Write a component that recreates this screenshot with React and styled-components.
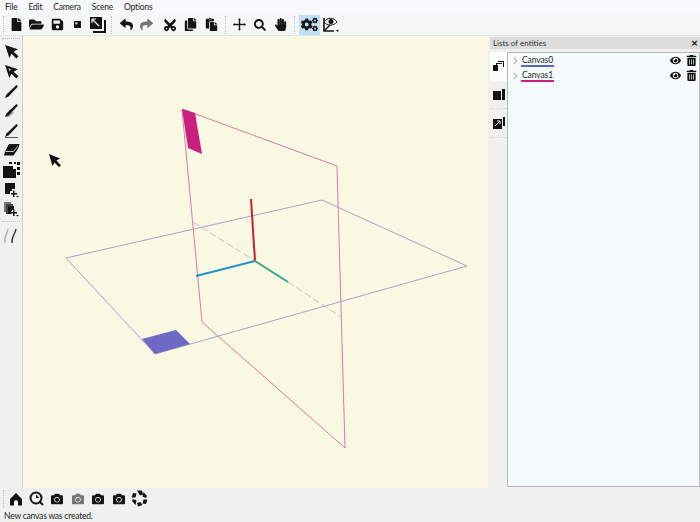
import React from "react"
import styled, { createGlobalStyle } from "styled-components"
import {
  FaFile,
  FaFolderOpen,
  FaSave,
  FaReply,
  FaShare,
  FaCut,
  FaCopy,
  FaPaste,
  FaSearch,
  FaHandPaper,
  FaCogs,
  FaEye,
  FaTrashAlt,
  FaCamera,
} from "react-icons/fa"

const GlobalStyle = createGlobalStyle`
  html, body {
    margin: 0;
    padding: 0;
    background: #f0f0f0;
    font-family: Lato, "Open Sans", sans-serif;
  }
`

const Window = styled.div`
  width: 700px;
  height: 522px;
  display: flex;
  flex-direction: column;
  overflow: hidden;
  background: #f0f0f0;
  color: #1c1c1c;
`

const MenuBar = styled.div`
  height: 14px;
  display: flex;
  align-items: center;
  gap: 11px;
  padding-left: 5px;
  background: #f7f8f9;
  font-size: 8.5px;
  letter-spacing: -0.2px;
`

const Toolbar = styled.div`
  height: 22px;
  display: flex;
  align-items: center;
  padding-left: 3px;
  background: #f5f6f6;
  border-bottom: 1px solid #e4e4e4;
  box-sizing: border-box;
`

const Group = styled.div`
  display: flex;
  align-items: center;
  margin-left: ${({ $gap }) => $gap || 0}px;
`

const Sep = styled.div`
  width: 0;
  height: 18px;
  margin-left: ${({ $gap }) => $gap || 0}px;
  border-left: 1px dotted #bdbdbd;
`

const Tool = styled.div`
  width: 20.5px;
  height: 20px;
  display: flex;
  align-items: center;
  justify-content: center;
  flex: none;
  font-size: ${({ $size }) => $size || 13}px;
  color: ${({ $muted }) => ($muted ? "#777" : "#141414")};
  background: ${({ $active }) => ($active ? "#bfe0f5" : "transparent")};
  svg {
    display: block;
    transform: ${({ $turn }) => $turn || "none"};
  }
`

const Main = styled.div`
  flex: 1;
  min-height: 0;
  display: flex;
`

const LeftBar = styled.div`
  width: 23px;
  flex: none;
  display: flex;
  flex-direction: column;
  align-items: center;
  box-sizing: border-box;
  border-right: 1px solid #d0d0d0;
  background: #f0f0f0;
`

const Grip = styled.div`
  width: 18px;
  height: 0;
  margin: 2px 0 3px;
  border-top: 1px dotted #bdbdbd;
`

const SideTool = styled(Tool)`
  height: 19.7px;
`

const HSep = styled.div`
  width: 18px;
  height: 0;
  margin: 2px 0 4px;
  border-top: 1px dotted #c4c4c4;
`

const Viewport = styled.div`
  width: 465px;
  flex: none;
  background: #f9f8e3;
  svg {
    display: block;
  }
`

const Dock = styled.div`
  flex: 1;
  display: flex;
  flex-direction: column;
  padding: 1px 0 1px 2px;
`

const DockTitle = styled.div`
  height: 12px;
  display: flex;
  align-items: center;
  justify-content: space-between;
  padding: 0 2px 0 3px;
  background: #dcdcdc;
  font-size: 8px;
  color: #333;
`

const Close = styled.span`
  font-size: 12px;
  font-weight: 700;
  color: #111;
  line-height: 1;
`

const DockBody = styled.div`
  flex: 1;
  min-height: 0;
  display: flex;
  margin-top: 3px;
`

const Tabs = styled.div`
  width: 17px;
  flex: none;
  display: flex;
  flex-direction: column;
`

const Tab = styled.div`
  height: 28.500px;
  display: flex;
  align-items: center;
  justify-content: center;
  background: ${({ $active }) => ($active ? "#fafdfc" : "transparent")};
  border-bottom: 1px dotted ${({ $active }) => ($active ? "transparent" : "#d4d4d4")};
  box-sizing: border-box;
`

const EntityList = styled.div`
  flex: 1;
  background: #f5fbfa;
  border: 1px solid #b8b8b8;
  box-sizing: border-box;
`

const EntityRow = styled.div`
  height: 15px;
  display: flex;
  align-items: center;
  padding: 0 2px 0 4px;
  color: #888;
`

const Chevron = styled.span`
  width: 5px;
  height: 5px;
  margin-left: -1px;
  border-top: 1px solid #a0a0a0;
  border-right: 1px solid #a0a0a0;
  transform: scale(0.8) rotate(45deg);
`

const EntityName = styled.span`
  margin-left: 4px;
  padding: 0 1px;
  font-size: 8.5px;
  letter-spacing: -0.1px;
  line-height: 10px;
  color: #2a2a2a;
  border-bottom: 2px solid ${({ $color }) => $color};
`

const RowIcons = styled.div`
  margin-left: auto;
  display: flex;
  align-items: center;
  gap: 5px;
  color: #111;
  font-size: 11px;
`

const BottomBar = styled.div`
  height: 21px;
  display: flex;
  align-items: center;
  padding-left: 3px;
  background: #f0f0f0;
`

const StatusBar = styled.div`
  height: 13px;
  display: flex;
  align-items: center;
  padding-left: 4px;
  font-size: 8.5px;
  letter-spacing: -0.2px;
  color: #222;
  background: #f0f0f0;
`

const Arrow = ({ hollow }) => (
  <svg width="15" height="15" viewBox="0 0 14 14">
    <path d="M1 1l12 4-4 2.200L13.500 11.500 11.500 13.500 7 9l-2 4z" fill="#141414" />
    {hollow && <path d="M4 4l3 1-2 2z" fill="#999" />}
  </svg>
)

const Pencil = ({ variant }) => (
  <svg width="15" height="15" viewBox="0 0 15 15">
    {variant === "marker" && <path d="M6 6l4 4-5 4H1z" fill="#aaa" />}
    <path d="M12.500 1l1.500 1.500L4.500 12.500 1 14l1.500-3.500z" fill="#141414" />
    {variant === "line" && <path d="M1 14.500h13" stroke="#555" strokeWidth="1" />}
  </svg>
)

const Eraser = () => (
  <svg width="17" height="14" viewBox="0 0 17 14">
    <path d="M6 1h10.500l-1 4-5 7.500H1l1-4z" fill="#141414" />
    <path d="M2.500 8.500h8L15 3" fill="none" stroke="#f0f0f0" strokeWidth="0.800" />
  </svg>
)

const SelectBox = () => (
  <svg width="18" height="18" viewBox="0 0 18 18">
    <path d="M1 5h10v3h3v9H1z" fill="#141414" />
    <path d="M7 1h3v2H7zM12 1h2v2h-2zM15 1h3v3h-3zM15 6h3v3h-3zM15 11h3v3h-3z" fill="#141414" />
  </svg>
)

const AddEntity = ({ stacked }) => (
  <svg width="16" height="16" viewBox="0 0 16 16">
    {stacked && <path d="M1 1h7v2H3v8H1z" fill="#777" />}
    {stacked && <path d="M3 3h7v2H5v8H3z" fill="#444" />}
    <path d={stacked ? "M5 5h6v4H9v1H8v3H5z" : "M2 1h10v6H9v2H7v3H2z"} fill="#141414" />
    <path d="M10 8.500h1.500V11H14v1.500h-2.500V15H10v-2.500H8V11h2z" fill="#141414" />
    <path d="M13 14h3l-1.500 1.500z" fill="#141414" />
  </svg>
)

const Curves = () => (
  <svg width="16" height="16" viewBox="0 0 16 16" fill="none">
    <path d="M2 15C0.500 9 4 7 5 1" stroke="#aaa" strokeWidth="1.300" />
    <path d="M9 15C8 9 12 7 13 1" stroke="#333" strokeWidth="1.500" />
  </svg>
)

const SmallBox = () => (
  <svg width="9" height="9" viewBox="0 0 9 9">
    <path d="M1 1h7v7H1z" fill="#141414" />
    <path d="M2 2l3 1-2 2z" fill="#f0f0f0" />
  </svg>
)

const BigBox = () => (
  <svg width="18" height="18" viewBox="0 0 18 18">
    <path d="M1 1h12v12H1z" fill="#141414" />
    <path d="M3 3l7 7M3 3h4M3 3v4" stroke="#f0f0f0" strokeWidth="1.200" fill="none" />
    <path d="M15 4h2v13H4v-2h11z" fill="#141414" />
  </svg>
)

const MoveCross = () => (
  <svg width="15" height="15" viewBox="0 0 15 15" fill="#141414">
    <path d="M6.800 2h1.400v11H6.800z" />
    <path d="M1.500 6.800h12v1.400h-12z" />
    <path d="M7.500 1l1.200 2H6.300zM7.500 14l-1.200-2h2.400zM1 7.500l2-1.200v2.400zM14 7.500l-2 1.200V6.300z" />
  </svg>
)

const EyeAxis = () => (
  <svg width="20" height="18" viewBox="0 0 20 18" fill="none">
    <path d="M4 2v13h10" stroke="#141414" strokeWidth="1.600" />
    <path d="M4 15l7-7" stroke="#141414" strokeWidth="1.400" />
    <path d="M4 6c3-5 10-5 13 0-3 4-10 4-13 0z" fill="#f5f6f6" stroke="#141414" />
    <circle cx="11" cy="5.500" r="2.500" fill="#141414" />
    <path d="M16 14h3l-1.500 2z" fill="#141414" />
  </svg>
)

const Aperture = () => (
  <svg width="17" height="17" viewBox="0 0 17 17" fill="#141414">
    <path d="M6 .5h5l1 4-3 1zM12.500 2l3.500 4-1 2-3.500-1.500zM16.500 9.500l-1.500 4.500-3.500-.5 1-4zM11.500 15l-4.500 1.500-1-3.500 3.500-1zM4.500 15L1 11l1-2 3.500 1.500zM.5 7.500L2 3l3.500.5-1 4z" />
  </svg>
)

const HomeIcon = () => (
  <svg width="14" height="14" viewBox="0 0 14 14" fill="#141414">
    <path d="M7 1L1 7v6.500h4V10c0-2.500 4-2.500 4 0v3.500h4V7z" />
  </svg>
)

const CircleSearch = () => (
  <svg width="15" height="15" viewBox="0 0 15 15" fill="none">
    <circle cx="7" cy="7" r="5.500" stroke="#141414" strokeWidth="2" />
    <path d="M7 3.500V7h3.500z" fill="#141414" />
    <path d="M11 11l3 3" stroke="#141414" strokeWidth="2" />
  </svg>
)

const TabStack = () => (
  <svg width="11" height="11" viewBox="0 0 11 11" fill="#141414">
    <path d="M0 5h5v6H0zM3 3h6v1H4v1H3zM5 1h6v6h-1V2H5z" />
  </svg>
)

const TabFolder = () => (
  <svg width="12" height="11" viewBox="0 0 12 11" fill="#141414">
    <path d="M0 2h8v9H0zM9 0h3v11H9z" />
  </svg>
)

const TabLink = () => (
  <svg width="12" height="12" viewBox="0 0 12 12" fill="#141414">
    <path d="M0 2h9v10H0z" />
    <path d="M2 9l5-5M4 4h3v3" stroke="#f0f0f0" fill="none" />
    <path d="M10 0h2v9h-2z" />
  </svg>
)

const Scene = () => (
  <svg width="465" height="451" viewBox="23 36 465 451" fill="none">
    <path d="M66 258L322 200 467 266 155 354z" stroke="#ab9fcd" strokeWidth="1" />
    <path d="M142 339L176 330 190 344 155 354z" fill="#6f68c4" />
    <path d="M182 109L337 166 345 448 202 322z" stroke="#d97aa3" strokeWidth="1" />
    <path d="M182 109L195 113 202 154 188 148z" fill="#c9207f" />
    <path d="M193 222L255 261M288 282L341 317" stroke="#c4c2c0" strokeDasharray="7 3" />
    <path d="M251 199L255 261" stroke="#c8202f" strokeWidth="2" />
    <path d="M196 276L255 261" stroke="#2592c8" strokeWidth="2" />
    <path d="M255 261L288 282" stroke="#2fa98c" strokeWidth="2" />
    <path d="M49 154l11 4.500-3.500 2L61 165.500 59 167l-4.500-4.500L52.500 166z" fill="#111" />
  </svg>
)

const entities = [
  { name: "Canvas0", color: "#5566c0" },
  { name: "Canvas1", color: "#c8207f" },
]

const App = () => (
  <Window>
    <GlobalStyle />
    <MenuBar>
      <span>File</span>
      <span>Edit</span>
      <span>Camera</span>
      <span>Scene</span>
      <span>Options</span>
    </MenuBar>
    <Toolbar>
      <Sep />
      <Group $gap={2}>
        <Tool><FaFile /></Tool>
        <Tool $size={15}><FaFolderOpen /></Tool>
        <Tool><FaSave /></Tool>
        <Tool><SmallBox /></Tool>
        <Tool><BigBox /></Tool>
      </Group>
      <Sep $gap={2} />
      <Group $gap={4.500}>
        <Tool><FaReply /></Tool>
        <Tool $muted><FaShare /></Tool>
      </Group>
      <Group $gap={3}>
        <Tool $size={14} $turn="rotate(-90deg)"><FaCut /></Tool>
        <Tool><FaCopy /></Tool>
        <Tool><FaPaste /></Tool>
      </Group>
      <Sep $gap={3.500} />
      <Group $gap={3}>
        <Tool><MoveCross /></Tool>
        <Tool $size={12}><FaSearch /></Tool>
        <Tool><FaHandPaper /></Tool>
      </Group>
      <Sep $gap={3.500} />
      <Group $gap={4}>
        <Tool $active $size={17}><FaCogs /></Tool>
        <Tool><EyeAxis /></Tool>
      </Group>
    </Toolbar>
    <Main>
      <LeftBar>
        <Grip />
        <SideTool><Arrow /></SideTool>
        <SideTool><Arrow hollow /></SideTool>
        <SideTool><Pencil /></SideTool>
        <SideTool><Pencil variant="marker" /></SideTool>
        <SideTool><Pencil variant="line" /></SideTool>
        <SideTool><Eraser /></SideTool>
        <SideTool><SelectBox /></SideTool>
        <SideTool><AddEntity /></SideTool>
        <SideTool><AddEntity stacked /></SideTool>
        <HSep />
        <SideTool><Curves /></SideTool>
      </LeftBar>
      <Viewport>
        <Scene />
      </Viewport>
      <Dock>
        <DockTitle>
          <span>Lists of entities</span>
          <Close>×</Close>
        </DockTitle>
        <DockBody>
          <Tabs>
            <Tab $active><TabStack /></Tab>
            <Tab><TabFolder /></Tab>
            <Tab><TabLink /></Tab>
          </Tabs>
          <EntityList>
            {entities.map(item => (
              <EntityRow key={item.name}>
                <Chevron />
                <EntityName $color={item.color}>{item.name}</EntityName>
                <RowIcons>
                  <FaEye />
                  <FaTrashAlt />
                </RowIcons>
              </EntityRow>
            ))}
          </EntityList>
        </DockBody>
      </Dock>
    </Main>
    <BottomBar>
      <Sep />
      <Group $gap={2}>
        <Tool><HomeIcon /></Tool>
        <Tool><CircleSearch /></Tool>
        <Tool $size={12}><FaCamera /></Tool>
        <Tool $size={12} $muted><FaCamera /></Tool>
        <Tool $size={12}><FaCamera /></Tool>
        <Tool $size={12}><FaCamera /></Tool>
        <Tool><Aperture /></Tool>
      </Group>
    </BottomBar>
    <StatusBar>New canvas was created.</StatusBar>
  </Window>
)

export default App
